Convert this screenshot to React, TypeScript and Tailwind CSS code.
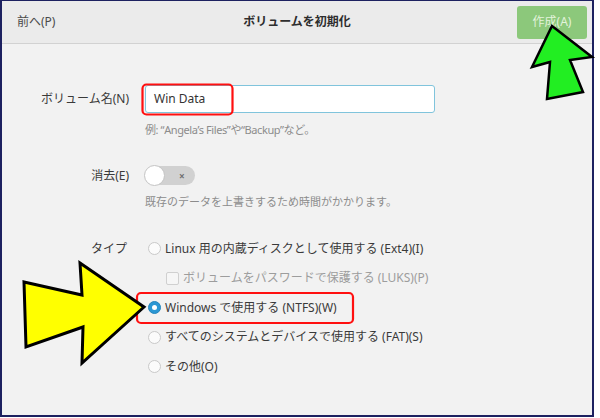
import React from "react";

const font = { fontFamily: '"Noto Sans", "Noto Sans CJK JP", sans-serif' };

function Radio({ checked }: { checked?: boolean }) {
  return checked ? (
    <span className="w-[13px] h-[13px] rounded-full bg-[#2b97d4] border border-[#2585bd] flex items-center justify-center shrink-0">
      <span className="w-[5px] h-[5px] rounded-full bg-white" />
    </span>
  ) : (
    <span className="w-[13px] h-[13px] rounded-full bg-[#fbfbfb] border border-[#c9c9c9] shrink-0" />
  );
}

function Row({ label, children }: { label?: string; children: React.ReactNode }) {
  return (
    <div className="flex items-center">
      <div className="w-[127px] text-right text-[#3a3a3a] shrink-0">{label}</div>
      <div className="ml-[16px] flex-1">{children}</div>
    </div>
  );
}

const options = [
  { text: "Linux 用の内蔵ディスクとして使用する (Ext4)(I)" },
  { text: "ボリュームをパスワードで保護する (LUKS)(P)", box: true },
  { text: "Windows で使用する (NTFS)(W)", checked: true },
  { text: "すべてのシステムとデバイスで使用する (FAT)(S)" },
  { text: "その他(O)" },
];

export default function App() {
  return (
    <div className="relative w-[600px] h-[418px] bg-white" style={font}>
      <div className="w-[594px] h-[417px] border-2 border-t border-[#1d2160] bg-[#f2f2f2] flex flex-col text-[12px]">
        <div className="h-[43px] shrink-0 bg-[#ebebeb] border-b border-[#d2d2d2] flex items-center px-[15px]">
          <div className="w-[100px] text-[#4a4a4a] text-[12px]">前へ(P)</div>
          <div className="flex-1 text-center font-bold text-[12px] text-[#2e2e2e]">ボリュームを初期化</div>
          <div className="w-[100px] flex justify-end">
            <div className="w-[70px] h-[33px] -mr-[10px] rounded-[3px] bg-[#8cc87b] text-[#e3f3dc] text-[12px] flex items-center justify-center">
              作成(A)
            </div>
          </div>
        </div>

        <div className="pt-[41px]">
          <Row label="ボリューム名(N)">
            <div className="w-[290px] h-[28px] rounded-[3px] bg-white border border-[#80c4dc] flex items-center px-[8px] text-[12px] text-[#333]">
              Win Data
            </div>
          </Row>
          <div className="ml-[143px] mt-[9px] h-[16px] leading-[16px] text-[11px] tracking-[-0.4px] text-[#8c8c8c]">
            例: “Angela’s Files”や“Backup”など。
          </div>

          <div className="mt-[28px]">
            <Row label="消去(E)">
              <div className="w-[50px] h-[19px] rounded-full bg-[#d1d1d1] relative flex items-center">
                <span className="w-[21px] h-[21px] -ml-[1px] rounded-full bg-white border border-[#c4c4c4]" />
                <span className="ml-[14px] text-[10px] font-bold text-[#6f6f6f] leading-none">×</span>
              </div>
            </Row>
          </div>
          <div className="ml-[143px] mt-[9px] h-[16px] leading-[16px] text-[11px] text-[#8c8c8c]">
            既存のデータを上書きするため時間がかかります。
          </div>

          <div className="mt-[24px] flex">
            <div className="w-[125px] h-[29.5px] flex items-center justify-end text-[#3a3a3a] shrink-0">タイプ</div>
            <div className="ml-[21px] flex flex-col">
              {options.map((o) => (
                <div key={o.text} className={`h-[29.5px] flex items-center ${o.box ? "ml-[18px]" : ""}`}>
                  {o.box ? (
                    <span className="w-[13px] h-[13px] rounded-[2px] bg-[#f6f6f6] border border-[#d0d0d0] shrink-0" />
                  ) : (
                    <Radio checked={o.checked} />
                  )}
                  <span className={`ml-[4px] ${o.box ? "text-[#9d9d9d]" : "text-[#3a3a3a]"}`}>{o.text}</span>
                </div>
              ))}
            </div>
          </div>
        </div>
      </div>

      <svg className="absolute left-0 top-0 pointer-events-none" width="600" height="418" viewBox="0 0 600 418">
        <rect x="142.5" y="84.5" width="90" height="30" rx="4" fill="none" stroke="#ff1010" strokeWidth="2.2" />
        <rect x="137" y="293" width="216" height="30" rx="4" fill="none" stroke="#ff1010" strokeWidth="2.2" />
        <polygon
          points="24,282 82,295 80,263 144,307 82,363 83,327 26,347"
          fill="#ffff00"
          stroke="#000"
          strokeWidth="3"
          strokeLinejoin="miter"
        />
        <polygon
          points="552,26 592,57 570,60 583,92 547,99 550,62 532,67"
          fill="#22ee22"
          stroke="#000"
          strokeWidth="2.5"
        />
      </svg>
    </div>
  );
}
